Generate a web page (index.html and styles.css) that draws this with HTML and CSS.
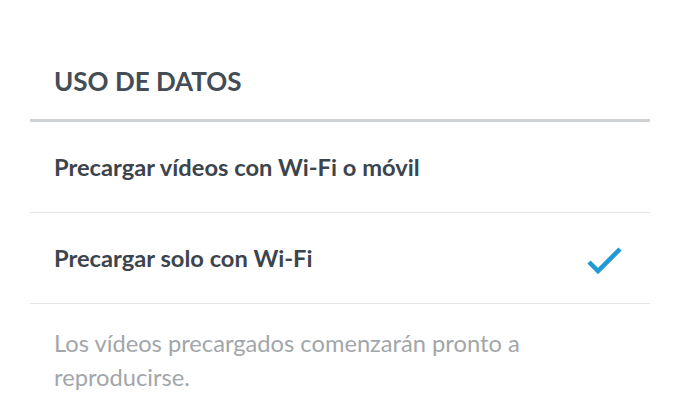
FILE: index.html
```html
<!DOCTYPE html>
<html lang="es">
<head>
    <meta charset="UTF-8">
    <meta name="viewport" content="width=device-width, initial-scale=1.0">
    <title>Uso de datos</title>
    <link rel="stylesheet" href="styles.css">
</head>
<body>
    <div class="settings">
        <h2 class="section-title">USO DE DATOS</h2>
        <ul class="options">
            <li class="option">
                <span class="option-label">Precargar vídeos con Wi-Fi o móvil</span>
            </li>
            <li class="option selected">
                <span class="option-label">Precargar solo con Wi-Fi</span>
                <svg class="check" width="38" height="30" viewBox="0 0 38 30">
                    <path d="M3 17 L12 26 L34 4" fill="none" stroke="#1f9ad6" stroke-width="4.5"/>
                </svg>
            </li>
        </ul>
        <p class="note">Los vídeos precargados comenzarán pronto a reproducirse.</p>
    </div>
</body>
</html>
```

FILE: styles.css
```css
body {
    margin: 0;
    background-color: #ffffff;
    font-family: Lato, "Liberation Sans", sans-serif;
}
.settings {
    padding: 0 30px;
}
.section-title {
    margin: 0;
    padding: 66px 24px 23px;
    font-size: 26px;
    font-weight: 700;
    line-height: 30px;
    color: #444c55;
    border-bottom: 3px solid #cfd2d5;
}
.options {
    list-style: none;
    margin: 0;
    padding: 0;
}
.option {
    display: flex;
    align-items: center;
    justify-content: space-between;
    height: 90px;
    padding: 0 26px 0 24px;
    border-bottom: 1px solid #e4e5e7;
}
.option-label {
    font-size: 23.7px;
    font-weight: 700;
    color: #3c444d;
}
.check {
    display: block;
    margin-top: 4px;
}
.note {
    margin: 0;
    padding: 22px 24px 0;
    font-size: 23.7px;
    line-height: 34px;
    color: #a2a6aa;
}
```
